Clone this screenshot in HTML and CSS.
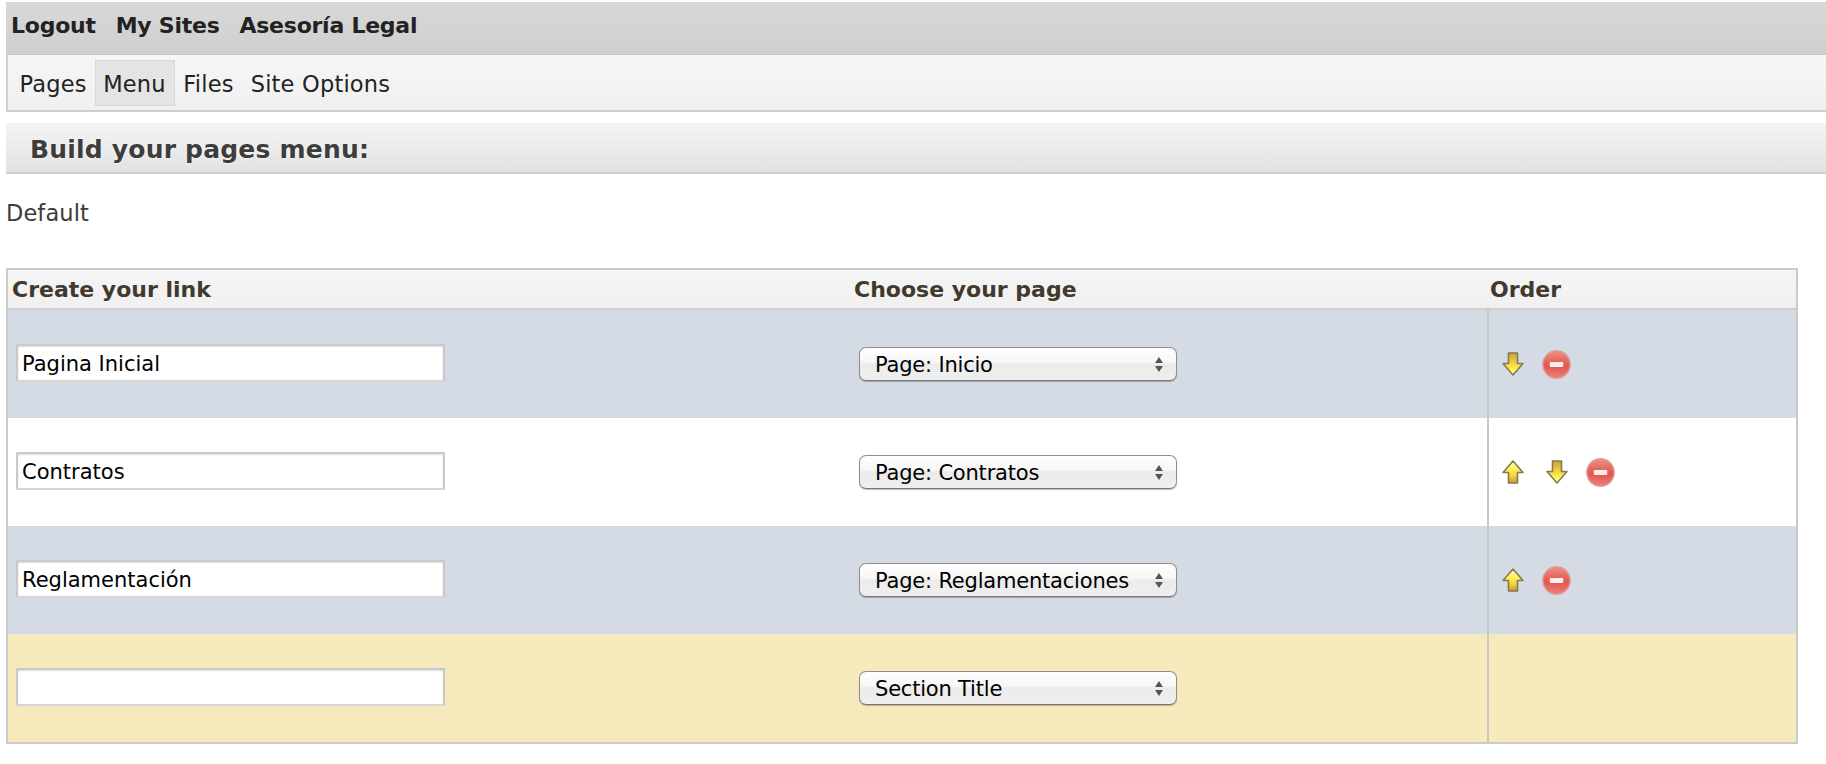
FILE: index.html
```html
<!DOCTYPE html>
<html lang="en">
<head>
<meta charset="utf-8">
<title>Build your pages menu</title>
<link rel="stylesheet" href="styles.css">
</head>
<body>
<svg class="defs" width="0" height="0" aria-hidden="true">
  <defs>
    <linearGradient id="arrowFill" x1="0" y1="0" x2="0" y2="1">
      <stop offset="0" stop-color="#c9a23c"/>
      <stop offset="0.45" stop-color="#f2d23e"/>
      <stop offset="0.75" stop-color="#fff45a"/>
      <stop offset="1" stop-color="#fffbd0"/>
    </linearGradient>
    <linearGradient id="arrowFillUp" x1="0" y1="0" x2="0" y2="1">
      <stop offset="0" stop-color="#fffbd0"/>
      <stop offset="0.35" stop-color="#fff45a"/>
      <stop offset="0.7" stop-color="#f2cf3e"/>
      <stop offset="1" stop-color="#c9963c"/>
    </linearGradient>
    <linearGradient id="minusFill" x1="0" y1="0" x2="0" y2="1">
      <stop offset="0" stop-color="#ef8f85"/>
      <stop offset="0.55" stop-color="#e2564e"/>
      <stop offset="1" stop-color="#ee8078"/>
    </linearGradient>
    <symbol id="down" viewBox="0 0 22 24">
      <path d="M6.500 1h9v10.500H21L11 23 1 11.500h5.500z" fill="url(#arrowFill)" stroke="#857a4e" stroke-width="1.600" stroke-linejoin="round"/>
    </symbol>
    <symbol id="up" viewBox="0 0 22 24">
      <path d="M11 1l10 11.500h-5.500V23h-9V12.500H1z" fill="url(#arrowFillUp)" stroke="#857a4e" stroke-width="1.600" stroke-linejoin="round"/>
    </symbol>
    <symbol id="minus" viewBox="0 0 28 28">
      <circle cx="14" cy="14" r="13.200" fill="url(#minusFill)" stroke="#dba09a" stroke-width="1.400"/>
      <rect x="7.500" y="11.500" width="13" height="5" rx="1" fill="#fbeeec"/>
    </symbol>
  </defs>
</svg>
<header class="top-bar">
  <a class="top-link" href="#">Logout</a>
  <a class="top-link" href="#">My Sites</a>
  <a class="top-link" href="#">Asesoría Legal</a>
</header>
<nav class="sub-nav">
  <a class="sub-link" href="#">Pages</a>
  <a class="sub-link sub-link-active" href="#">Menu</a>
  <a class="sub-link" href="#">Files</a>
  <a class="sub-link" href="#">Site Options</a>
</nav>
<h1 class="title-bar">Build your pages menu:</h1>
<p class="menu-name">Default</p>
<table class="menu-table">
  <thead>
    <tr>
      <th class="col-link">Create your link</th>
      <th class="col-page">Choose your page</th>
      <th class="col-order">Order</th>
    </tr>
  </thead>
  <tbody>
    <tr class="row-blue">
      <td class="cell-link"><input class="link-input" type="text" value="Pagina Inicial"></td>
      <td class="cell-page"><span class="select-wrap"><select class="page-select"><option>Page: Inicio</option></select></span></td>
      <td class="cell-order"><span class="icons"><svg class="arrow"><use href="#down"/></svg><svg class="minus"><use href="#minus"/></svg></span></td>
    </tr>
    <tr class="row-white">
      <td class="cell-link"><input class="link-input" type="text" value="Contratos"></td>
      <td class="cell-page"><span class="select-wrap"><select class="page-select"><option>Page: Contratos</option></select></span></td>
      <td class="cell-order"><span class="icons"><svg class="arrow"><use href="#up"/></svg><svg class="arrow"><use href="#down"/></svg><svg class="minus"><use href="#minus"/></svg></span></td>
    </tr>
    <tr class="row-blue">
      <td class="cell-link"><input class="link-input" type="text" value="Reglamentación"></td>
      <td class="cell-page"><span class="select-wrap"><select class="page-select"><option>Page: Reglamentaciones</option></select></span></td>
      <td class="cell-order"><span class="icons"><svg class="arrow"><use href="#up"/></svg><svg class="minus"><use href="#minus"/></svg></span></td>
    </tr>
    <tr class="row-yellow">
      <td class="cell-link"><input class="link-input" type="text" value=""></td>
      <td class="cell-page"><span class="select-wrap"><select class="page-select"><option>Section Title</option></select></span></td>
      <td class="cell-order"></td>
    </tr>
  </tbody>
</table>
</body>
</html>
```

FILE: styles.css
```css
* { box-sizing: border-box; }

html, body { background: #fff; }

body {
  margin: 0;
  padding: 2px 0 0 6px;
  font-family: "DejaVu Sans", sans-serif;
  color: #3c3c3c;
}

.defs { position: absolute; }

a { text-decoration: none; color: inherit; }

.top-bar {
  display: flex;
  align-items: center;
  gap: 20px;
  height: 53px;
  padding: 0 0 5px 5px;
  background: linear-gradient(#d8d8d8, #cfcfcf);
  border-bottom: 1px solid #c8c8c8;
}

.top-link {
  font-size: 22px;
  font-weight: 700;
  letter-spacing: -0.25px;
  color: #222;
}

.sub-nav {
  display: flex;
  align-items: center;
  height: 57px;
  padding: 0 0 0 3px;
  background: linear-gradient(#f6f6f6, #f0f0f0);
  border-left: 2px solid #cfcfcf;
  border-bottom: 2px solid #cfcfcf;
}

.sub-link {
  display: flex;
  align-items: center;
  height: 46px;
  padding: 2px 8.500px 0;
  font-size: 22.500px;
  letter-spacing: 0.2px;
  color: #222;
}

.sub-link-active {
  background: #e4e4e4;
  border: 1px solid #d8d8d8;
  padding: 2px 8px 0 7px;
}

.title-bar {
  display: flex;
  align-items: center;
  height: 51px;
  margin: 11px 0 0;
  padding: 3px 0 0 24px;
  font-size: 25px;
  font-weight: 700;
  letter-spacing: 0.2px;
  color: #3d3d3d;
  background: linear-gradient(#f4f4f4, #e2e2e2);
  border-bottom: 2px solid #cdd0d4;
  text-shadow: 0 0 3px #fff;
}

.menu-name {
  margin: 27px 0 0;
  font-size: 22.500px;
  line-height: 24px;
  letter-spacing: 0.1px;
  color: #3c3c3c;
}

.menu-table {
  width: 1792px;
  margin-top: 43px;
  border-collapse: separate;
  border-spacing: 0;
  border: 2px solid #cacaca;
  table-layout: fixed;
}

.menu-table th {
  height: 40px;
  padding: 0 0 0 3px;
  text-align: left;
  font-size: 22px;
  font-weight: 700;
  color: #41392c;
  background: linear-gradient(#f5f5f5, #f0f0f0);
  border-bottom: 2px solid #cecece;
}

.col-link { width: 843px; }
.col-page { width: 636px; }

.menu-table .col-link { padding-left: 4px; }

.menu-table td {
  height: 108px;
  padding: 0;
  vertical-align: middle;
}

.row-blue { background: #d4dbe4; }
.row-white { background: #fff; }
.row-yellow { background: #f6e9bb; }

.menu-table .cell-link { padding-left: 8px; }
.menu-table .cell-page { padding-left: 8px; }

.menu-table .cell-order {
  border-left: 2px solid #c8c8c8;
  padding-left: 13px;
}

.link-input {
  display: block;
  width: 429px;
  height: 38px;
  margin-bottom: 2px;
  padding: 2px 4px 0;
  font: 21px "DejaVu Sans", sans-serif;
  color: #000;
  background: #fff;
  border: 2px solid #c9c9c9;
  border-bottom-color: #d6d6d6;
  box-shadow: inset 0 1px 2px #ddd;
  border-radius: 0;
  outline: none;
}

.select-wrap {
  position: relative;
  display: block;
  width: 318px;
  height: 34px;
}

.select-wrap::before,
.select-wrap::after {
  content: "";
  position: absolute;
  right: 14px;
  width: 0;
  height: 0;
  border-left: 4px solid transparent;
  border-right: 4px solid transparent;
  pointer-events: none;
}

.select-wrap::before {
  top: 10px;
  border-bottom: 6px solid #555;
}

.select-wrap::after {
  top: 19px;
  border-top: 6px solid #555;
}

.page-select {
  appearance: none;
  -webkit-appearance: none;
  display: block;
  width: 100%;
  height: 100%;
  padding: 1px 30px 0 15px;
  font: 21px "DejaVu Sans", sans-serif;
  letter-spacing: -0.2px;
  color: #000;
  background: linear-gradient(#fff 0%, #f6f6f6 45%, #ebebeb 50%, #efefef 100%);
  border: 1px solid #8e8e8e;
  border-bottom-color: #777;
  border-radius: 7px;
  box-shadow: 0 1px 1px rgba(0, 0, 0, 0.25);
}

.icons {
  display: flex;
  align-items: center;
  gap: 22px;
}

.arrow { width: 22px; height: 24px; display: block; filter: blur(0.3px); }
.minus { width: 29px; height: 29px; display: block; margin-left: -4px; filter: blur(0.3px); }
```
